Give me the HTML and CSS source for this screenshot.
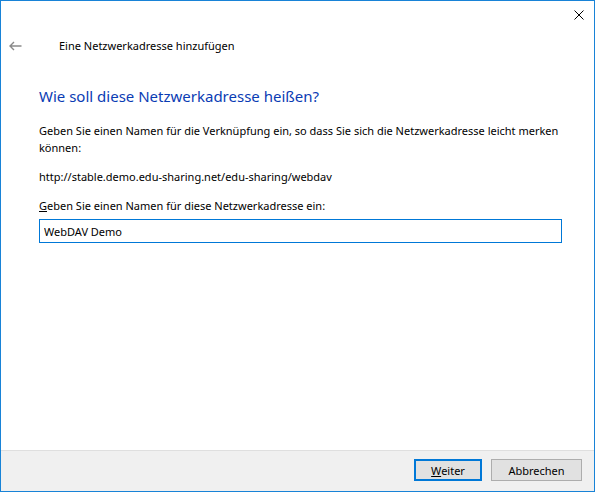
FILE: index.html
```html
<!DOCTYPE html>
<html lang="de">
<head>
    <meta charset="UTF-8">
    <meta name="viewport" content="width=device-width, initial-scale=1.0">
    <title>Eine Netzwerkadresse hinzufügen</title>
    <link rel="stylesheet" href="styles.css">
</head>
<body>
    <div class="window">
        <div class="titlebar">
            <button class="close" title="Schließen">
                <svg width="10" height="10" viewBox="0 0 10 10">
                    <path d="M0.5 0.5 L9.5 9.5 M9.5 0.5 L0.5 9.5" stroke="#000" stroke-width="1" fill="none"/>
                </svg>
            </button>
        </div>

        <div class="nav">
            <span class="back">
                <svg width="13" height="10" viewBox="0 0 13 10">
                    <path d="M1 5 H12.5 M5 1 L1 5 L5 9" stroke="#8a8a8a" stroke-width="1.4" fill="none"/>
                </svg>
            </span>
            <span class="nav-title">Eine Netzwerkadresse hinzufügen</span>
        </div>

        <div class="content">
            <h1>Wie soll diese Netzwerkadresse heißen?</h1>
            <p>Geben Sie einen Namen für die Verknüpfung ein, so dass Sie sich die Netzwerkadresse leicht merken können:</p>
            <p>http://stable.demo.edu-sharing.net/edu-sharing/webdav</p>
            <label for="name"><u>G</u>eben Sie einen Namen für diese Netzwerkadresse ein:</label>
            <input class="textbox" type="text" id="name" value="WebDAV Demo">
        </div>

        <div class="footer">
            <button class="btn btn-default"><u>W</u>eiter</button>
            <button class="btn">Abbrechen</button>
        </div>
    </div>
</body>
</html>
```

FILE: styles.css
```css
/* Wizard window */
html, body {
    height: 100%;
}

body {
    margin: 0;
    font-family: "Noto Sans", "Open Sans", sans-serif;
    font-size: 11px;
    color: #000;
    background: #fff;
}

.window {
    box-sizing: border-box;
    height: 100%;
    border: 1px solid #1883d7;
    display: flex;
    flex-direction: column;
}

.titlebar {
    height: 29px;
    display: flex;
    justify-content: flex-end;
}

.close {
    border: none;
    background: none;
    padding: 0;
    margin: 9px 10px 0 0;
    width: 10px;
    height: 10px;
    display: flex;
}

.nav {
    display: flex;
    align-items: center;
    height: 32px;
}

.back {
    display: flex;
    margin-left: 8px;
    width: 50px;
}

.nav-title {
    line-height: 16px;
}

/* Page body */
.content {
    padding: 0 32px 0 38px;
}

h1 {
    margin: 23px 0 15px;
    font-size: 15px;
    font-weight: normal;
    color: #0a3cb4;
    line-height: 22px;
}

p {
    margin: 0 0 12px;
    line-height: 17px;
}

label {
    display: block;
    line-height: 17px;
    margin-bottom: 5px;
}

.textbox {
    box-sizing: border-box;
    width: 523px;
    height: 24px;
    margin: 0;
    border: 1px solid #0078d7;
    padding: 0 4px;
    font-family: inherit;
    font-size: 11px;
    color: #000;
    outline: none;
}

/* Button row */
.footer {
    box-sizing: border-box;
    margin-top: auto;
    height: 41px;
    background: #f0f0f0;
    border-top: 1px solid #dfdfdf;
    display: flex;
    justify-content: flex-end;
    align-items: flex-start;
    gap: 9px;
    padding: 8px 12px 0 0;
}

.btn {
    box-sizing: border-box;
    height: 22px;
    min-width: 68px;
    padding: 0 10px;
    background: #e1e1e1;
    border: 1px solid #adadad;
    font-family: inherit;
    font-size: 11px;
    color: #000;
}

.btn-default {
    border: 2px solid #0078d7;
}

.btn:last-child {
    width: 91px;
}
```
